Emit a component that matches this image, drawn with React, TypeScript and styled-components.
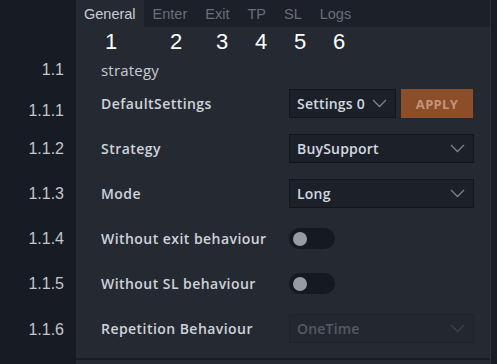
import React from "react";
import styled, { createGlobalStyle } from "styled-components";

const Global = createGlobalStyle`
  html, body { margin: 0; padding: 0; background: #1a1f27; }
  body { width: 497px; height: 364px; overflow: hidden; }
`;

const Page = styled.div`
  display: flex;
  width: 497px;
  height: 364px;
  background: #1a1f27;
`;

const Main = styled.div`
  display: flex;
  flex-direction: column;
  width: 491px;
  height: 364px;
  border-right: 1px solid #2b313a;
  box-sizing: border-box;
  background: #252a32;
`;

const Strip = styled.div`
  flex: 1;
  background: #181d25;
`;

const Line = styled.div<{ $h: number; $border?: boolean }>`
  display: grid;
  grid-template-columns: 76px 1fr;
  height: ${(p) => p.$h}px;
  box-sizing: border-box;
  ${(p) => (p.$border ? "border-bottom: 1px solid #171b21;" : "")}
`;

const Gutter = styled.div<{ $shift?: number }>`
  background: #171c24;
  display: flex;
  align-items: center;
  justify-content: flex-end;
  padding-right: 12px;
  padding-top: ${(p) => p.$shift ?? 0}px;
  box-sizing: border-box;
  font-family: "Liberation Sans", Arial, sans-serif;
  font-size: 16px;
  color: #c3c7cd;
`;

const TabBar = styled.div`
  display: flex;
  background: #1b2029;
`;

const Tab = styled.div<{ $active?: boolean }>`
  display: flex;
  align-items: center;
  padding: 0 ${(p) => (p.$active ? 8 : 9)}px;
  background: ${(p) => (p.$active ? "#252a32" : "transparent")};
  font-family: "Liberation Sans", Arial, sans-serif;
  font-size: 14.5px;
  color: ${(p) => (p.$active ? "#c9cdd3" : "#687079")};
`;

const Marks = styled.div`
  display: flex;
  align-items: center;
  background: #252a32;
`;

const Mark = styled.div<{ $w: number }>`
  width: ${(p) => p.$w}px;
  text-align: center;
  font-family: "Liberation Sans", Arial, sans-serif;
  font-size: 22px;
  color: #ffffff;
  padding-top: 2px;
`;

const Content = styled.div<{ $end?: boolean }>`
  display: flex;
  align-items: ${(p) => (p.$end ? "flex-end" : "center")};
  padding-left: 25px;
  padding-bottom: ${(p) => (p.$end ? 2 : 0)}px;
  box-sizing: border-box;
`;

const Section = styled.div`
  font-family: "Open Sans", sans-serif;
  font-size: 15px;
  letter-spacing: 0.2px;
  color: #c6cad0;
  line-height: 18px;
`;

const Label = styled.div`
  width: 188px;
  font-family: "Open Sans", sans-serif;
  font-weight: 600;
  font-size: 14px;
  letter-spacing: 0.45px;
  color: #cdd3da;
  white-space: nowrap;
`;

const Controls = styled.div`
  display: flex;
  gap: 5px;
  align-items: center;
`;

const Select = styled.div<{ $w: number; $disabled?: boolean }>`
  width: ${(p) => p.$w}px;
  height: 29px;
  box-sizing: border-box;
  display: flex;
  align-items: center;
  justify-content: space-between;
  padding: 0 8px 0 7px;
  background: ${(p) => (p.$disabled ? "#232830" : "#1c2129")};
  border: 1px solid ${(p) => (p.$disabled ? "#1e232b" : "#12161c")};
  font-family: "Open Sans", sans-serif;
  font-weight: 600;
  font-size: 14px;
  letter-spacing: 0.2px;
  color: ${(p) => (p.$disabled ? "#555b63" : "#d2d8e0")};
`;

const Apply = styled.div`
  width: 72px;
  height: 29px;
  display: flex;
  align-items: center;
  justify-content: center;
  background: #8b4e29;
  font-family: "Open Sans", sans-serif;
  font-weight: 700;
  font-size: 13px;
  letter-spacing: 0.3px;
  color: #c3937a;
`;

const Toggle = styled.div`
  width: 46px;
  height: 21px;
  border-radius: 11px;
  background: #151a21;
  display: flex;
  align-items: center;
  padding-left: 4px;
  box-sizing: border-box;
`;

const Knob = styled.div`
  width: 14px;
  height: 14px;
  border-radius: 50%;
  background: #979ba3;
`;

const Filler = styled.div`
  flex: 1;
  display: grid;
  grid-template-columns: 76px 1fr;
  border-bottom: 2px solid #171b22;
`;

const FillGutter = styled.div`
  background: #171c24;
`;

const Bottom = styled.div`
  height: 4px;
  display: grid;
  grid-template-columns: 76px 1fr;
`;

const Chevron = ({ dim }: { dim?: boolean }) => (
  <svg width="15" height="9" viewBox="0 0 15 9">
    <polyline
      points="1,1 7.5,7.5 14,1"
      fill="none"
      stroke={dim ? "#3c424a" : "#7c838c"}
      strokeWidth="1.3"
    />
  </svg>
);

const tabs = ["General", "Enter", "Exit", "TP", "SL", "Logs"];
const marks = [
  { n: "1", w: 70 },
  { n: "2", w: 60 },
  { n: "3", w: 32 },
  { n: "4", w: 46 },
  { n: "5", w: 32 },
  { n: "6", w: 46 },
];

export default function App() {
  return (
    <Page>
      <Global />
      <Main>
        <Line $h={27}>
          <Gutter />
          <TabBar>
            {tabs.map((t, i) => (
              <Tab key={t} $active={i === 0}>
                {t}
              </Tab>
            ))}
          </TabBar>
        </Line>
        <Line $h={25} $border>
          <Gutter />
          <Marks>
            {marks.map((m) => (
              <Mark key={m.n} $w={m.w}>
                {m.n}
              </Mark>
            ))}
          </Marks>
        </Line>
        <Line $h={29}>
          <Gutter $shift={6}>1.1</Gutter>
          <Content $end>
            <Section>strategy</Section>
          </Content>
        </Line>
        <Line $h={45}>
          <Gutter $shift={15}>1.1.1</Gutter>
          <Content>
            <Label>DefaultSettings</Label>
            <Controls>
              <Select $w={107}>
                Settings 0 <Chevron />
              </Select>
              <Apply>APPLY</Apply>
            </Controls>
          </Content>
        </Line>
        <Line $h={45}>
          <Gutter>1.1.2</Gutter>
          <Content>
            <Label>Strategy</Label>
            <Select $w={185}>
              BuySupport <Chevron />
            </Select>
          </Content>
        </Line>
        <Line $h={45}>
          <Gutter>1.1.3</Gutter>
          <Content>
            <Label>Mode</Label>
            <Select $w={185}>
              Long <Chevron />
            </Select>
          </Content>
        </Line>
        <Line $h={45}>
          <Gutter>1.1.4</Gutter>
          <Content>
            <Label>Without exit behaviour</Label>
            <Toggle>
              <Knob />
            </Toggle>
          </Content>
        </Line>
        <Line $h={45}>
          <Gutter>1.1.5</Gutter>
          <Content>
            <Label>Without SL behaviour</Label>
            <Toggle>
              <Knob />
            </Toggle>
          </Content>
        </Line>
        <Line $h={45}>
          <Gutter $shift={3}>1.1.6</Gutter>
          <Content>
            <Label>Repetition Behaviour</Label>
            <Select $w={185} $disabled>
              OneTime <Chevron dim />
            </Select>
          </Content>
        </Line>
        <Filler>
          <FillGutter />
          <div />
        </Filler>
        <Bottom>
          <FillGutter />
          <div />
        </Bottom>
      </Main>
      <Strip />
    </Page>
  );
}
